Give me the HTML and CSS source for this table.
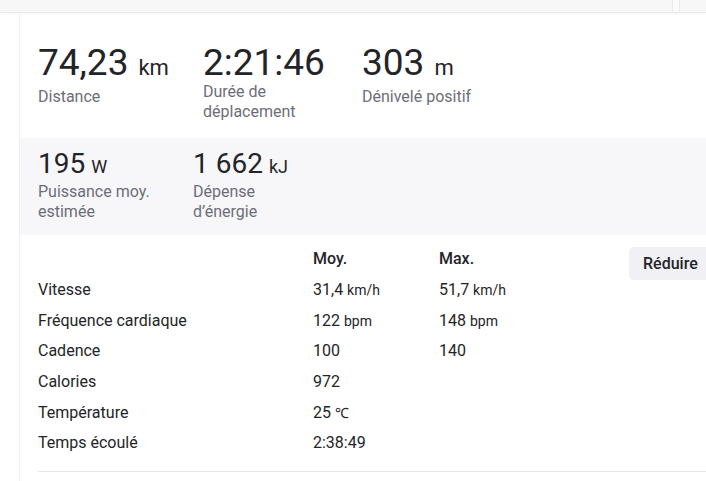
FILE: index.html
```html
<!DOCTYPE html>
<html lang="fr">
<head>
<meta charset="utf-8">
<link rel="stylesheet" href="styles.css">
</head>
<body>
<div class="topbar">
  <div class="topbar-main"></div>
  <div class="topbar-sep"></div>
  <div class="topbar-end"></div>
</div>
<div class="page">
  <section class="stats stats-primary">
    <div class="stat">
      <div class="value">74,23<span class="unit">km</span></div>
      <div class="label">Distance</div>
    </div>
    <div class="stat">
      <div class="value">2:21:46</div>
      <div class="label">Durée de déplacement</div>
    </div>
    <div class="stat">
      <div class="value">303<span class="unit">m</span></div>
      <div class="label">Dénivelé positif</div>
    </div>
  </section>
  <section class="stats stats-secondary">
    <div class="stat">
      <div class="value">195<span class="unit">W</span></div>
      <div class="label">Puissance moy. estimée</div>
    </div>
    <div class="stat">
      <div class="value">1 662<span class="unit">kJ</span></div>
      <div class="label">Dépense d’énergie</div>
    </div>
  </section>
  <section class="details">
    <div class="row head">
      <div></div>
      <div class="th">Moy.</div>
      <div class="th">Max.</div>
      <div class="btn-cell"><button class="btn">Réduire</button></div>
    </div>
    <div class="row"><div>Vitesse</div><div>31,4 <span class="u">km/h</span></div><div>51,7 <span class="u">km/h</span></div></div>
    <div class="row"><div>Fréquence cardiaque</div><div>122 <span class="u">bpm</span></div><div>148 <span class="u">bpm</span></div></div>
    <div class="row"><div>Cadence</div><div>100</div><div>140</div></div>
    <div class="row"><div>Calories</div><div>972</div><div></div></div>
    <div class="row"><div>Température</div><div>25 <span class="u">℃</span></div><div></div></div>
    <div class="row"><div>Temps écoulé</div><div>2:38:49</div><div></div></div>
    <div class="divider"></div>
  </section>
</div>
</body>
</html>
```

FILE: styles.css
```css
html, body {
  margin: 0;
  padding: 0;
  overflow: hidden;
  background: #ffffff;
}
body {
  font-family: Roboto, "Liberation Sans", sans-serif;
  color: #242428;
  width: 706px;
}
.topbar {
  display: flex;
  height: 12px;
  background: #f7f7f7;
  border-bottom: 1px solid #e9e9e9;
  box-shadow: 0 1px 2px rgba(0,0,0,0.04);
}
.topbar-main { flex: 0 0 672px; }
.topbar-sep {
  flex: 0 0 6px;
  background: #fbfbfb;
  border-left: 1px solid #ececec;
  border-right: 1px solid #ececec;
}
.topbar-end { flex: 1; }
.page {
  margin-left: 19px;
  border-left: 1px solid #f0f0f0;
  min-height: 468px;
}
.stats {
  display: grid;
  padding-left: 18px;
}
.stats-primary {
  grid-template-columns: 165px 159px auto;
  padding-top: 30px;
  padding-bottom: 16px;
}
.stats-secondary {
  grid-template-columns: 155px auto;
  background: #f7f7fa;
  padding-top: 10px;
  padding-bottom: 13px;
}
.stat .label {
  max-width: 126px;
  font-size: 16px;
  line-height: 20px;
  color: #6d6d78;
}
.stats-primary .value {
  font-size: 37px;
  line-height: 40px;
  font-weight: 400;
  margin-bottom: -1px;
  white-space: nowrap;
}
.stats-primary .unit {
  font-size: 22px;
  margin-left: 10px;
}
.stats-secondary .value {
  font-size: 28px;
  line-height: 32px;
  margin-bottom: -1px;
  white-space: nowrap;
}
.stats-secondary .unit {
  font-size: 18px;
  margin-left: 6px;
}
.details {
  padding: 9px 0 0 18px;
}
.row {
  display: grid;
  grid-template-columns: 275px 126px 190px auto;
  height: 30.67px;
  align-items: center;
  font-size: 16px;
  line-height: 20px;
  white-space: nowrap;
}
.row.head {
  align-items: start;
  padding-top: 5px;
  height: 25.67px;
}
.th { font-weight: 500; }
.u { font-size: 14px; }
.btn-cell { position: relative; }
.btn {
  margin-top: -2px;
  font-family: inherit;
  font-size: 16px;
  font-weight: 500;
  color: #242428;
  background: #f0f0f5;
  border: none;
  border-radius: 5px;
  padding: 0 14px;
  height: 33px;
  cursor: pointer;
}
.divider {
  margin-top: 12px;
  border-top: 1px solid #e6e6eb;
}
```
